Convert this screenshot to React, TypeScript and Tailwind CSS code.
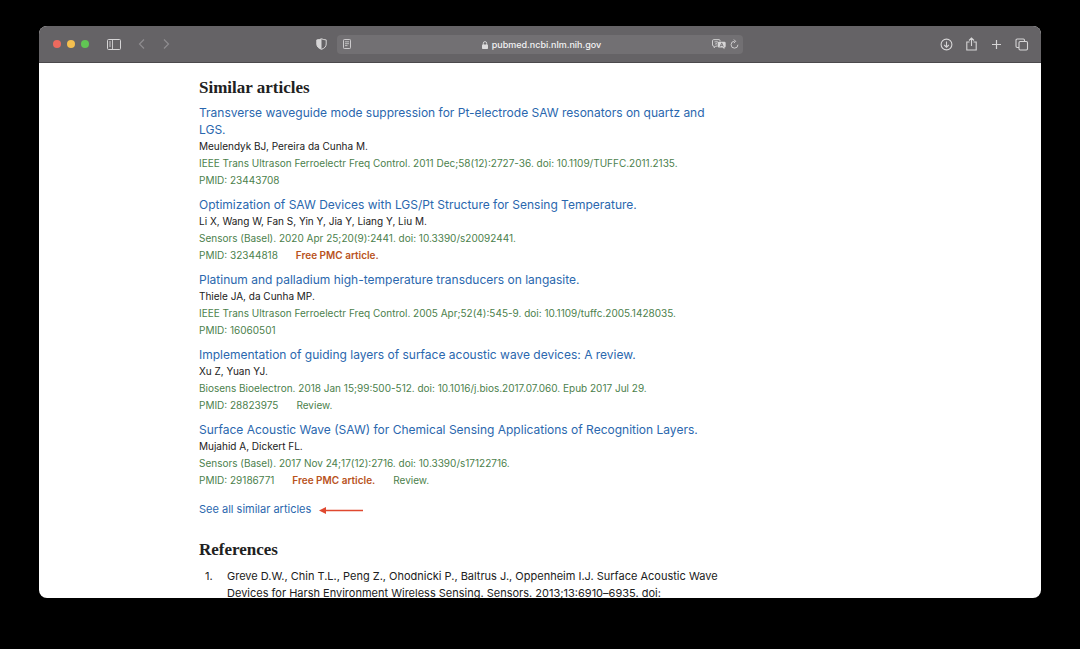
import React from 'react';

interface Article {
  title: string;
  authors: string;
  journal: string;
  pmid: string;
  free?: boolean;
  review?: boolean;
}

const articles: Article[] = [
  {
    title: 'Transverse waveguide mode suppression for Pt-electrode SAW resonators on quartz and LGS.',
    authors: 'Meulendyk BJ, Pereira da Cunha M.',
    journal: 'IEEE Trans Ultrason Ferroelectr Freq Control. 2011 Dec;58(12):2727-36. doi: 10.1109/TUFFC.2011.2135.',
    pmid: '23443708',
  },
  {
    title: 'Optimization of SAW Devices with LGS/Pt Structure for Sensing Temperature.',
    authors: 'Li X, Wang W, Fan S, Yin Y, Jia Y, Liang Y, Liu M.',
    journal: 'Sensors (Basel). 2020 Apr 25;20(9):2441. doi: 10.3390/s20092441.',
    pmid: '32344818',
    free: true,
  },
  {
    title: 'Platinum and palladium high-temperature transducers on langasite.',
    authors: 'Thiele JA, da Cunha MP.',
    journal: 'IEEE Trans Ultrason Ferroelectr Freq Control. 2005 Apr;52(4):545-9. doi: 10.1109/tuffc.2005.1428035.',
    pmid: '16060501',
  },
  {
    title: 'Implementation of guiding layers of surface acoustic wave devices: A review.',
    authors: 'Xu Z, Yuan YJ.',
    journal: 'Biosens Bioelectron. 2018 Jan 15;99:500-512. doi: 10.1016/j.bios.2017.07.060. Epub 2017 Jul 29.',
    pmid: '28823975',
    review: true,
  },
  {
    title: 'Surface Acoustic Wave (SAW) for Chemical Sensing Applications of Recognition Layers.',
    authors: 'Mujahid A, Dickert FL.',
    journal: 'Sensors (Basel). 2017 Nov 24;17(12):2716. doi: 10.3390/s17122716.',
    pmid: '29186771',
    free: true,
    review: true,
  },
];

const Toolbar: React.FC = () => (
  <header className="flex h-[37px] shrink-0 items-center border-b border-[#4b494c] bg-[#656366] px-3 text-[#d6d5d6]">
    {/* Left: window buttons, sidebar, history, privacy */}
    <div className="flex flex-1 items-center">
      <div className="flex gap-1.5 pl-0.5">
        <button aria-label="Close" className="size-2 rounded-full bg-[#ed6a5e]" />
        <button aria-label="Minimize" className="size-2 rounded-full bg-[#f4bf4f]" />
        <button aria-label="Zoom" className="size-2 rounded-full bg-[#61c554]" />
      </div>
      <button aria-label="Show sidebar" className="ml-[18px]">
        <svg width="14" height="11" viewBox="0 0 14 11" fill="none" stroke="currentColor">
          <rect x="0.5" y="0.5" width="13" height="10" rx="1" />
          <path d="M5.5 .5v10M2 3h2M2 5h2M2 7h2" strokeWidth="0.9" />
        </svg>
      </button>
      <button aria-label="Back" className="ml-[15px] text-[#8f8d90]">
        <svg width="12" height="12" viewBox="0 0 12 12" fill="none" stroke="currentColor" strokeWidth="1.2">
          <path d="M8 1.500L3.500 6L8 10.500" />
        </svg>
      </button>
      <button aria-label="Forward" className="ml-3 text-[#8f8d90]">
        <svg width="12" height="12" viewBox="0 0 12 12" fill="none" stroke="currentColor" strokeWidth="1.2">
          <path d="M4 1.500L8.500 6L4 10.500" />
        </svg>
      </button>
      <button aria-label="Privacy report" className="mr-2.5 ml-auto">
        <svg width="11" height="12" viewBox="0 0 11 12" stroke="currentColor">
          <path d="M5.500 .8C7 1.500 8.500 1.800 10.200 1.900V6C10.200 8.600 8.500 10.300 5.500 11.300C2.500 10.300 .8 8.600 .8 6V1.900C2.500 1.800 4 1.500 5.500 .8Z" fill="none" />
          <path d="M5.500 .8V11.300C2.500 10.300 .8 8.600 .8 6V1.900C2.500 1.800 4 1.500 5.500 .8Z" fill="currentColor" stroke="none" />
        </svg>
      </button>
    </div>

    {/* Address bar */}
    <div className="flex h-[19px] w-[406px] items-center rounded bg-[#727073] px-1.5">
      <button aria-label="Reader">
        <svg width="8" height="10" viewBox="0 0 8 10" fill="none" stroke="currentColor" strokeWidth="0.9">
          <rect x="0.5" y="0.5" width="7" height="9" rx="0.8" />
          <path d="M2 2.800h4M2 4.700h4M2 6.600h2.500" strokeWidth="0.8" />
        </svg>
      </button>
      <div className="flex flex-1 items-center justify-center gap-1 pt-0.5 pl-5 text-[9px] text-[#f3f3f3]">
        <svg width="6" height="8" viewBox="0 0 6 8" fill="none">
          <rect x="0" y="3.500" width="6" height="4.500" rx="0.7" fill="#dddcdd" />
          <path d="M1.300 4V2.300a1.700 1.700 0 0 1 3.400 0V4" stroke="#dddcdd" strokeWidth="0.9" />
        </svg>
        <span className="font-medium">pubmed.ncbi.nlm.nih.gov</span>
      </div>
      <button aria-label="Translate" className="mr-1">
        <svg width="14" height="11" viewBox="0 0 13 10" fill="none" stroke="currentColor">
          <path d="M5 6.500H3.500L2 8V6.500H1.500a1 1 0 0 1-1-1V1.500a1 1 0 0 1 1-1H6.500a1 1 0 0 1 1 1V2" strokeWidth="0.9" />
          <path d="M2.300 2.400h3.200M3.900 1.600v.8M2.600 5C4 4.500 4.700 3.700 5 2.500M2.900 3.200C3.300 4 3.900 4.500 4.700 4.900" strokeWidth="0.6" />
          <path d="M6.500 2.500h5a1.200 1.200 0 0 1 1.200 1.200v3a1.200 1.200 0 0 1-1.200 1.200V9.500L9.900 7.900H6.500A1.200 1.200 0 0 1 5.300 6.700v-3A1.200 1.200 0 0 1 6.500 2.500Z" fill="currentColor" stroke="none" />
          <path d="M7.500 7L9 3.500L10.500 7M8 5.800h2" stroke="#727073" strokeWidth="0.8" />
        </svg>
      </button>
      <button aria-label="Reload" className="-mr-0.5">
        <svg width="9" height="10" viewBox="0 0 10 11" fill="none" stroke="currentColor">
          <path d="M5 2.500A3.800 3.800 0 1 0 8.800 6.300M4.300 .5L6.300 2.500L4.300 4.500" />
        </svg>
      </button>
    </div>

    {/* Right: page actions */}
    <div className="flex flex-1 items-center justify-end gap-3">
      <button aria-label="Downloads">
        <svg width="13" height="13" viewBox="0 0 13 13" fill="none" stroke="currentColor" strokeWidth="1.1">
          <circle cx="6.500" cy="6.500" r="5.400" />
          <path d="M6.500 3.500v5.700M4.200 7L6.500 9.300L8.800 7" />
        </svg>
      </button>
      <button aria-label="Share">
        <svg width="13" height="14" viewBox="0 0 13 14" fill="none" stroke="currentColor" strokeWidth="1.1">
          <path d="M4.500 5H1.800V13H11.200V5H8.500M6.500 9V1.200M4 3.500L6.500 1L9 3.500" />
        </svg>
      </button>
      <button aria-label="New tab">
        <svg width="13" height="13" viewBox="0 0 13 13" fill="none" stroke="currentColor" strokeWidth="1.2">
          <path d="M6.500 2v9M2 6.500h9" />
        </svg>
      </button>
      <button aria-label="Tab overview">
        <svg width="14" height="13" viewBox="0 0 14 13" fill="none" stroke="currentColor" strokeWidth="1.1">
          <rect x="4" y="3.500" width="8.500" height="8.500" rx="1.200" />
          <path d="M4 9.500H2.200A1.200 1.200 0 0 1 1 8.300V2.200A1.200 1.200 0 0 1 2.200 1H8.300A1.200 1.200 0 0 1 9.500 2.200V3.500" />
        </svg>
      </button>
    </div>
  </header>
);

const ArticleItem: React.FC<{ article: Article }> = ({ article }) => (
  <li>
    <a href="#article" className="block text-[12px] leading-[17px] text-[#2a67ae]">{article.title}</a>
    <div className="text-[10px] leading-[17px] text-[#4c7f4c]">
      <p className="text-[#212121]">{article.authors}</p>
      <p>{article.journal}</p>
      <p className="flex gap-[18px]">
        <span>PMID: {article.pmid}</span>
        {article.free && <span className="font-semibold text-[#b9531d]">Free PMC article.</span>}
        {article.review && <span>Review.</span>}
      </p>
    </div>
  </li>
);

export default function App() {
  return (
    <div className="flex h-screen flex-col bg-black px-[39px] pt-[26px] pb-[51px] font-['Inter',sans-serif]">
      <div className="flex min-h-0 flex-1 flex-col overflow-hidden rounded-lg bg-white">
        <Toolbar />
        <main className="min-h-0 flex-1 overflow-hidden pt-[13px] pl-40 text-[#212121]">
          <div className="max-w-[524px]">
            <section>
              <h2 className="font-['Liberation_Serif',serif] text-[17px] leading-6 font-bold">Similar articles</h2>
              <ul className="mt-1 flex flex-col gap-[7px]">
                {articles.map((article) => (
                  <ArticleItem key={article.pmid} article={article} />
                ))}
              </ul>
              <div className="mt-3 flex items-center gap-2 text-[11px] leading-[17px]">
                <a href="#similar" className="text-[#2a67ae]">See all similar articles</a>
                <svg width="44" height="8" viewBox="0 0 44 8">
                  <path d="M5 4.500H44" stroke="#e0482f" strokeWidth="1.500" />
                  <path d="M0 4.500L7 1V8Z" fill="#e0482f" />
                </svg>
              </div>
            </section>

            <section className="mt-5">
              <h2 className="font-['Liberation_Serif',serif] text-[17px] leading-6 font-bold">References</h2>
              <ol className="mt-1.5 text-[11px] leading-[17px]">
                <li className="flex">
                  <span className="w-7 shrink-0 pl-1.5">1.</span>
                  <span>
                    Greve D.W., Chin T.L., Peng Z., Ohodnicki P., Baltrus J., Oppenheim I.J. Surface Acoustic Wave
                    Devices for Harsh Environment Wireless Sensing. Sensors. 2013;13:6910–6935. doi:
                  </span>
                </li>
              </ol>
            </section>
          </div>
        </main>
      </div>
    </div>
  );
}
